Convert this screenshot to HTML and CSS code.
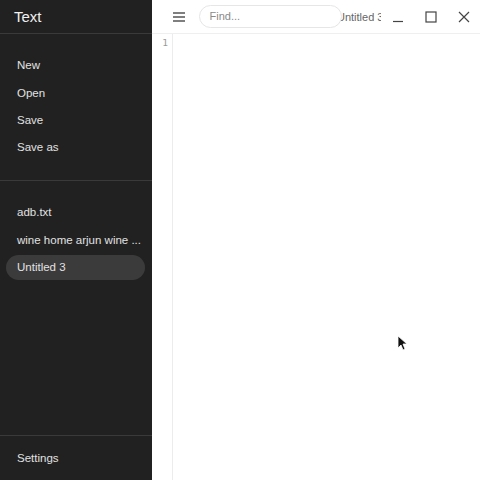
FILE: index.html
```html
<!DOCTYPE html>
<html lang="en">
<head>
<meta charset="utf-8">
<title>Text</title>
<link rel="stylesheet" href="styles.css">
</head>
<body>
<div class="app">
  <aside class="sidebar">
    <div class="side-head">Text</div>
    <nav class="menu">
      <div class="item">New</div>
      <div class="item">Open</div>
      <div class="item">Save</div>
      <div class="item">Save as</div>
    </nav>
    <div class="files">
      <div class="item">adb.txt</div>
      <div class="item">wine home arjun wine ...</div>
      <div class="item"><span class="pill">Untitled 3</span></div>
    </div>
    <div class="side-foot">
      <div class="item">Settings</div>
    </div>
  </aside>
  <main class="main">
    <header class="topbar">
      <button class="hamb" aria-label="menu">
        <svg width="14" height="12" viewBox="0 0 14 12"><path d="M1 2h12M1 6h12M1 10h12" stroke="#555" stroke-width="1.4" fill="none"/></svg>
      </button>
      <div class="find">Find...</div>
      <div class="title">Untitled 3</div>
      <div class="winbtns">
        <button class="wb" aria-label="minimize"><svg width="12" height="12" viewBox="0 0 12 12"><path d="M1 10.5h10" stroke="#444" stroke-width="1.2"/></svg></button>
        <button class="wb" aria-label="maximize"><svg width="12" height="12" viewBox="0 0 12 12"><rect x="1" y="1" width="10" height="10" fill="none" stroke="#444" stroke-width="1.2"/></svg></button>
        <button class="wb" aria-label="close"><svg width="12" height="12" viewBox="0 0 12 12"><path d="M1 1l10 10M11 1L1 11" stroke="#444" stroke-width="1.2"/></svg></button>
      </div>
    </header>
    <section class="editor">
      <div class="gutter">1</div>
      <div class="text"></div>
      <svg class="pointer" width="12" height="16" viewBox="0 0 12 16"><path d="M1 1v12l3-3 2 5 2-1-2-5h4z" fill="#111" stroke="#fff" stroke-width="0.8"/></svg>
    </section>
  </main>
</div>
</body>
</html>
```
FILE: styles.css
```css
* { box-sizing: border-box; }
html, body { margin: 0; padding: 0; height: 100%; }
body {
  font-family: "Liberation Sans", Arial, sans-serif;
  background: #fff;
}
.app {
  display: flex;
  width: 480px;
  height: 480px;
  overflow: hidden;
}
.sidebar {
  width: 152px;
  flex: none;
  background: #212121;
  color: #e6e6e6;
  display: flex;
  flex-direction: column;
}
.side-head {
  height: 34px;
  border-bottom: 1px solid #3a3a3a;
  padding-left: 14px;
  font-size: 15px;
  line-height: 33px;
  color: #f0f0f0;
}
.menu {
  padding: 17.5px 0 19px;
  border-bottom: 1px solid #3a3a3a;
}
.item {
  height: 27.4px;
  display: flex;
  align-items: center;
  padding-left: 17px;
  font-size: 11.5px;
  color: #e2e2e2;
  white-space: nowrap;
}
.files {
  padding-top: 17.5px;
  flex: 1;
}
.files .item:last-child {
  padding-left: 6px;
}
.pill {
  display: block;
  width: 139px;
  height: 25px;
  line-height: 25px;
  border-radius: 13px;
  background: #3b3b3b;
  padding-left: 11px;
}
.side-foot {
  border-top: 1px solid #3a3a3a;
  height: 45px;
  display: flex;
  align-items: center;
}
.main {
  flex: 1;
  display: flex;
  flex-direction: column;
  min-width: 0;
}
.topbar {
  height: 34px;
  border-bottom: 1px solid #efefef;
  display: flex;
  align-items: center;
  padding-left: 14px;
}
.hamb {
  width: 26px;
  height: 26px;
  border: 0;
  background: none;
  padding: 0;
  display: flex;
  align-items: center;
  justify-content: center;
  margin-right: 7px;
}
.find {
  position: relative;
  z-index: 1;
  width: 146px;
  height: 23px;
  border: 1px solid #e6e6e6;
  border-radius: 12px;
  background: #fff;
  font-size: 11px;
  color: #8a8a8a;
  line-height: 21px;
  padding-left: 10px;
}
.title {
  width: 44px;
  margin-left: -5px;
  overflow: hidden;
  white-space: nowrap;
  font-size: 11px;
  color: #666;
  flex: none;
}
.winbtns {
  display: flex;
  margin-left: auto;
}
.wb {
  width: 33px;
  height: 32px;
  border: 0;
  background: none;
  padding: 0;
  display: flex;
  align-items: center;
  justify-content: center;
}
.editor {
  flex: 1;
  display: flex;
  position: relative;
}
.gutter {
  width: 21px;
  border-right: 1px solid #ececec;
  font-family: "DejaVu Sans Mono", monospace;
  font-size: 9.5px;
  color: #9a9a9a;
  text-align: right;
  padding-right: 4px;
  padding-top: 3px;
}
.text { flex: 1; }
.pointer {
  position: absolute;
  left: 245px;
  top: 301px;
}
```
